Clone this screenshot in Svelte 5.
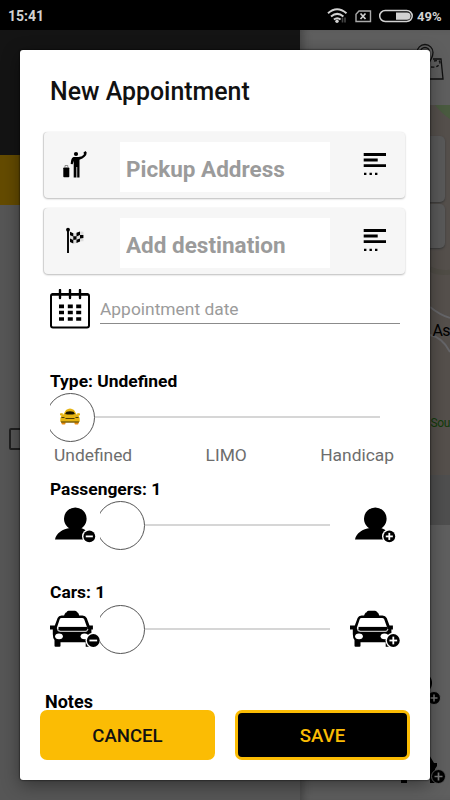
<script lang="ts">
	let type = 'Undefined';
	let passengers = 1;
	let cars = 1;
	let pickup = '';
	let destination = '';
	let date = '';

	const types = ['Undefined', 'LIMO', 'Handicap'];
</script>

{#snippet badge(plus: boolean, cx: number, cy: number, r: number)}
	<circle {cx} {cy} r={r + 1.4} fill="#fff" />
	<circle {cx} {cy} {r} />
	<path d="M{cx - r * 0.6} {cy}h{r * 1.2}" stroke="#fff" stroke-width="1.8" />
	{#if plus}
		<path d="M{cx} {cy - r * 0.6}v{r * 1.2}" stroke="#fff" stroke-width="1.8" />
	{/if}
{/snippet}

{#snippet person(plus: boolean)}
	<svg width="50" height="50" viewBox="0 0 50 50">
		<circle cx="25.3" cy="18.8" r="11.3" />
		<path d="M20 24v4C13 29 6 33 5 39.6h36C42 34 36 29.5 31 28v-4z" />
		{@render badge(plus, 39.3, 36.4, 5.9)}
	</svg>
{/snippet}

{#snippet car(plus: boolean)}
	<svg width="50" height="50" viewBox="0 0 50 50">
		<path d="M14 12.5C14.500 9 16 8.700 16.500 8.300Q17 6.800 18.500 6.800h6.500q1.700 0 2.200 1.500Q28.800 8.700 29.300 12.500z" />
		<path d="M11.500 11.500h21q3 0 4.200 2.500l2.800 7.600h3.400v3.800h-1.500v17.300h-5.700v-4.500H10.500v3.500q0 1-1 1h-4q-1 0-1-1V36q-1.700-2-1.700-6v-4.600H0v-3.800h4.800l2.800-7.600q1-2.500 3.900-2.500z" />
		<path d="M11.500 14h20.500q1.600 0 2.200 1.300l3 8.500q.4 1.200-.8 1.200H7.700q-1.200 0-.8-1.200l2.800-8.500q.5-1.300 1.800-1.300z" fill="#fff" />
		<path d="M7.500 25q.5 2.300 3 2.300h25q2 0 2.300-2.300" fill="none" stroke="#bbb" stroke-width="1.200" />
		<path d="M8.500 24h28.500" stroke="#000" stroke-width="2.200" />
		<ellipse cx="9" cy="32.300" rx="3.900" ry="2.900" fill="#fff" />
		<ellipse cx="34.500" cy="32.300" rx="3.900" ry="2.900" fill="#fff" />
		{@render badge(plus, 43.3, 36.5, 6.4)}
	</svg>
{/snippet}

{#snippet lines()}
	<svg class="lines" width="24" height="24" viewBox="0 0 24 24">
		<path d="M.7 2.500h22.300M.7 8h14M.7 13.700h22.300" stroke="#000" stroke-width="2.800" />
		<path d="M1 20.700h2.400v2.300H1zM6.500 20.700h2.400v2.300H6.500zM12 20.700h2.400v2.300h-2.400z" />
	</svg>
{/snippet}

<div class="screen">
	<div class="status">
		<span>15:41</span>
		<svg width="88" height="16" viewBox="0 0 88 16" fill="none" stroke="#d2d2d2">
			<path d="M1 5.300q9-8 18.500 0M4 8.500q6.200-5.200 12.400 0M6.900 11.500q3.400-2.600 6.700 0" stroke-width="2" />
			<circle cx="10" cy="13.300" r="1.700" fill="#d2d2d2" stroke="none" />
			<path d="M15.500 9.500v5M18 9.500v5" stroke="#444" stroke-width="1.600" />
			<path d="M32 3h11.500v10.500H29V6.200z" stroke="#aaa" stroke-width="1.400" />
			<path d="M33.500 5.500l5 5.500m0-5.500l-5 5.500" stroke-width="1.700" />
			<rect x="52.700" y="2.500" width="32.500" height="11" rx="5.500" stroke-width="1.500" />
			<path d="M69 4.500h11a3.600 3.600 0 0 1 0 7.200H69z" fill="#d2d2d2" stroke="none" />
		</svg>
		<span class="percent">49%</span>
	</div>

	<!-- page behind the dialog -->
	<div class="behind">
		<div class="drawer">
			<div class="profile"></div>
			<div class="selected"></div>
			<div class="menu">
				<svg width="20" height="24" viewBox="0 0 20 24"><rect x="2" y="2" width="22" height="20" rx="1" fill="none" stroke="#202020" stroke-width="2" /></svg>
			</div>
		</div>
		<div class="page">
			<div class="page-head">
				<svg width="33" height="40" viewBox="0 0 33 40" fill="none" stroke="#101010" stroke-width="1.300">
					<path d="M9 25Q2 15 2 10.500a8 8 0 0 1 16 0Q18 16 11 25zM18 17h8l2 20H5" />
					<circle cx="10" cy="10" r="4.500" />
					<path d="M16 25q8 1 9-5-1-2-6-1" stroke-dasharray="3 2" />
				</svg>
			</div>
			<div class="map">
				<svg width="150" height="370" viewBox="0 0 150 370">
					<path d="M135 0h15v14q-8-5-15-14z" fill="#4a5b40" />
					<path d="M130 164q10 5 20 3" fill="none" stroke="#504d46" stroke-width="5" />
					<path d="M130 202q10 8 20 11M130 230q12 2 20 17" fill="none" stroke="#666669" stroke-width="1.800" />
				</svg>
				<div class="map-card"></div>
				<div class="map-card second"></div>
				<span class="place">As</span>
				<span class="place green">Sou</span>
			</div>
			<div class="strip"></div>
			<div class="page-foot">
				<svg class="back-person" width="50" height="50" viewBox="0 0 50 50">
					<circle cx="29" cy="19" r="11" /><path d="M9 39q4-11 20-11t16 11z" fill="none" />
					<circle cx="42" cy="34" r="6.500" stroke="#5e5e5e" /><path d="M38.500 34h7m-3.500-3.500v7" stroke="#777" stroke-width="1.500" />
				</svg>
				<svg class="back-car" width="50" height="50" viewBox="0 0 50 50">
					<path d="M10 12h22l6 10h3v3l-2 3v14h-5v-4H11v4H5V29l-5-1v-3h5z" />
					<circle cx="42.500" cy="35.500" r="7" stroke="#5e5e5e" /><path d="M38.500 35.500h8m-4-4v8" stroke="#777" stroke-width="1.700" />
				</svg>
			</div>
		</div>
	</div>

	<div class="dialog">
		<h1>New Appointment</h1>

		<div class="address">
			<svg width="26" height="28" viewBox="0 0 26 28">
				<circle cx="14" cy="3" r="2.100" />
				<path d="M11.500 6h5q4-.3 5.500-2.700l-.5-1.700L23.500 0l1.200 1.500q0 3-2 4.300-2 2.200-5.200 2.900V26.500h-2.300V16h-.8v10.500h-2.700V9.800l-1 3.500-2-.3Q9 6.500 11.500 6z" />
				<rect x="1.300" y="16.500" width="6" height="9.800" rx=".7" />
				<path d="M3 16.500v-2h2.800v2" fill="none" stroke="#777" stroke-width=".8" />
			</svg>
			<input type="text" placeholder="Pickup Address" bind:value={pickup} />
			{@render lines()}
		</div>

		<div class="address">
			<svg width="26" height="28" viewBox="0 0 26 28">
				<path d="M6 2v24" stroke="#000" stroke-width="1.900" />
				<circle cx="6" cy="2.700" r="1.900" />
				<path d="M8 4.800q4 3 7 1t6.500-1v9.500q-4-.5-6.500 1.500t-7-1z" fill="#ddd" />
				<path d="M8 4.800l3.300 1.400v3.200L8 8.300zM14.500 5.800L18 4.500V8l-3.500 1.400zM11.300 9.300l3.200-.2v3.500l-3.200.3zM18 8l3.400.1v3L18 11.500zM8 11.500l3.300 1.500v3.400L8 15.100zM14.500 12.700l3.500-1.200v3L14.500 16z" />
			</svg>
			<input type="text" placeholder="Add destination" bind:value={destination} />
			{@render lines()}
		</div>

		<div class="date-row">
			<svg width="40" height="40" viewBox="0 0 40 40">
				<rect x="1" y="5" width="38" height="33.500" rx="2" fill="none" stroke="#000" stroke-width="2" />
				<path d="M2 5.500h36" stroke="#000" stroke-width="2.300" />
				<path d="M10 1v8M20 1v8M30 1v8" stroke="#000" stroke-width="2.400" stroke-linecap="round" />
				<path d="M9 17.300h5m3.800 0h5m3.400 0h5M9 23.500h5m3.800 0h5m3.400 0h5M9 30h5m3.800 0h5m3.400 0h5" stroke="#000" stroke-width="3.700" />
			</svg>
			<input type="text" placeholder="Appointment date" bind:value={date} />
		</div>

		<div class="label type-label">Type: {type}</div>
		<div class="slider type-slider">
			<div class="thumb">
				<svg width="20" height="18" viewBox="0 0 20 18">
					<rect x="1.500" y="12" width="4" height="4.500" rx="1" fill="#e98a12" />
					<rect x="14.500" y="12" width="4" height="4.500" rx="1" fill="#e98a12" />
					<path d="M0 5.500l2.500-.5L3 7l3-5q2-1.500 4-1.500T14 2l3 5 .5-2 2.500.5v1.700l-1.500.4q1.500 2 1.300 6l-1.300 1H1.500l-1.300-1q-.2-4 1.300-6L0 7.200z" fill="#e6b413" />
					<path d="M6.500 3.800q3.500-.9 7 0l1.500 2.200q-5 1-10 0z" fill="#181400" />
					<path d="M1.500 9.500h3m11 0h3M5.500 10.500h9M1 14h18" stroke="#4b3b04" stroke-width="1.200" />
				</svg>
			</div>
			<div class="track"></div>
		</div>
		<div class="types">
			{#each types as t}
				<span>{t}</span>
			{/each}
		</div>

		<div class="label">Passengers: {passengers}</div>
		<div class="counter">
			{@render person(false)}
			<div class="slider">
				<div class="thumb"></div>
				<div class="track"></div>
			</div>
			{@render person(true)}
		</div>

		<div class="label cars-label">Cars: {cars}</div>
		<div class="counter">
			{@render car(false)}
			<div class="slider">
				<div class="thumb"></div>
				<div class="track"></div>
			</div>
			{@render car(true)}
		</div>

		<div class="notes">Notes</div>
		<div class="buttons">
			<button class="cancel">CANCEL</button>
			<button class="save">SAVE</button>
		</div>
	</div>
</div>

<style>
	.screen {
		position: relative;
		width: 450px;
		height: 800px;
		overflow: hidden;
		background: #626262;
		font-family: Roboto, "Noto Sans", sans-serif;
		color: #000;
	}
	svg {
		display: block;
		flex: none;
	}

	.status {
		display: flex;
		align-items: center;
		height: 30px;
		padding: 2px 8px 0;
		box-sizing: border-box;
		background: #000;
		color: #d2d2d2;
		font-size: 14px;
		font-weight: 700;
	}
	.status svg {
		margin-left: auto;
	}
	.status .percent {
		width: 25px;
		margin-left: 2px;
		font-size: 13px;
	}

	.behind {
		display: flex;
		height: 770px;
	}
	.drawer {
		width: 300px;
		background: #565656;
	}
	.profile {
		height: 125px;
		background: #141414;
	}
	.selected {
		height: 50px;
		background: #644b00;
	}
	.menu {
		padding: 222px 0 0 8px;
	}
	.page {
		width: 150px;
		background: #5f5f5f;
		box-shadow: inset 8px 0 8px -5px #444;
	}
	.page-head {
		display: flex;
		justify-content: flex-end;
		height: 75px;
		padding: 12px 2px 0 0;
		box-sizing: border-box;
	}
	.map {
		position: relative;
		height: 370px;
		overflow: hidden;
		background: #55504c;
	}
	.map-card {
		position: absolute;
		top: 31px;
		left: 0;
		width: 145px;
		height: 66px;
		border-radius: 5px;
		background: #5a5a5a;
		box-shadow: 0 1px 2px #383838;
	}
	.map-card.second {
		top: 99px;
		height: 44px;
	}
	.place {
		position: absolute;
		right: 0;
		top: 216px;
		font-size: 16px;
		letter-spacing: -0.6px;
	}
	.place.green {
		top: 311px;
		font-size: 12px;
		letter-spacing: -0.4px;
		color: #123c0a;
	}
	.strip {
		height: 50px;
		background: #4f4f4f;
	}
	.page-foot {
		display: flex;
		flex-direction: column;
		align-items: flex-end;
		padding-top: 139px;
	}
	.back-person {
		margin-right: 8px;
	}
	.back-car {
		margin: 27px 4px 0 0;
	}

	.dialog {
		position: absolute;
		top: 50px;
		left: 20px;
		width: 410px;
		height: 730px;
		padding: 0 30px;
		box-sizing: border-box;
		border-radius: 3px;
		background: #fff;
		box-shadow: 0 0 2px #000, 0 5px 18px rgba(0, 0, 0, 0.4);
	}
	h1 {
		height: 82px;
		margin: 0;
		font-size: 24.9px;
		font-weight: 500;
		line-height: 83px;
		color: #111;
	}

	.address {
		display: flex;
		align-items: center;
		height: 66px;
		margin: 0 -5px 10px -6px;
		padding: 0 18px;
		box-sizing: border-box;
		border-radius: 4px;
		background: #f6f6f6;
		box-shadow: 0 1px 2px #bbb, -1px 0 1px #d8d8d8;
	}
	.address input {
		width: 210px;
		height: 50px;
		margin: 4px 33px 0 32px;
		padding: 3px 6px 0;
		box-sizing: border-box;
		border: none;
		background: #fff;
		font: 700 22.5px Roboto, sans-serif;
	}
	input::placeholder {
		color: #9b9b9b;
		opacity: 1;
	}
	.lines {
		margin-top: -2px;
	}

	.date-row {
		display: flex;
		gap: 10px;
		height: 40px;
		margin-top: 15px;
	}
	.date-row input {
		width: 300px;
		height: 35px;
		padding: 6px 0 0;
		box-sizing: border-box;
		border: none;
		border-bottom: 1px solid #8b8b8b;
		background: none;
		font: 400 17.4px Roboto, sans-serif;
	}

	.label {
		height: 22px;
		font-size: 17.4px;
		font-weight: 700;
		line-height: 22px;
	}
	.type-label {
		margin-top: 41px;
	}
	.cars-label {
		margin-top: 32px;
		line-height: 21px;
	}
	.slider {
		display: flex;
		align-items: center;
		width: 230px;
		height: 50px;
		overflow: hidden;
	}
	.type-slider {
		width: 330px;
	}
	.thumb {
		display: flex;
		flex: none;
		align-items: center;
		justify-content: center;
		width: 49px;
		height: 49px;
		margin-left: -4px;
		padding-right: 1px;
		box-sizing: border-box;
		border: 1px solid #555;
		border-radius: 50%;
	}
	.track {
		flex: 1;
		height: 2px;
		background: #d6d6d6;
	}
	.types {
		display: flex;
		justify-content: space-between;
		height: 26px;
		margin: 0 6px 10px 4px;
		font-size: 17.4px;
		line-height: 26px;
		color: #6d6d6d;
	}
	.counter {
		display: flex;
	}
	.counter .slider {
		margin-right: 20px;
	}

	.notes {
		height: 20px;
		margin: 36px 0 0 -5px;
		font-size: 18px;
		font-weight: 700;
		line-height: 24px;
	}
	.buttons {
		position: relative;
		display: flex;
		gap: 20px;
		margin: 0 -10px;
	}
	button {
		width: 175px;
		height: 50px;
		padding: 1px 0 0;
		border: 3px solid #fbbc04;
		border-radius: 7px;
		font: 500 18.6px Roboto, sans-serif;
	}
	.cancel {
		background: #fbbc04;
		color: #111;
	}
	.save {
		background: #000;
		color: #fbbc04;
	}
</style>
